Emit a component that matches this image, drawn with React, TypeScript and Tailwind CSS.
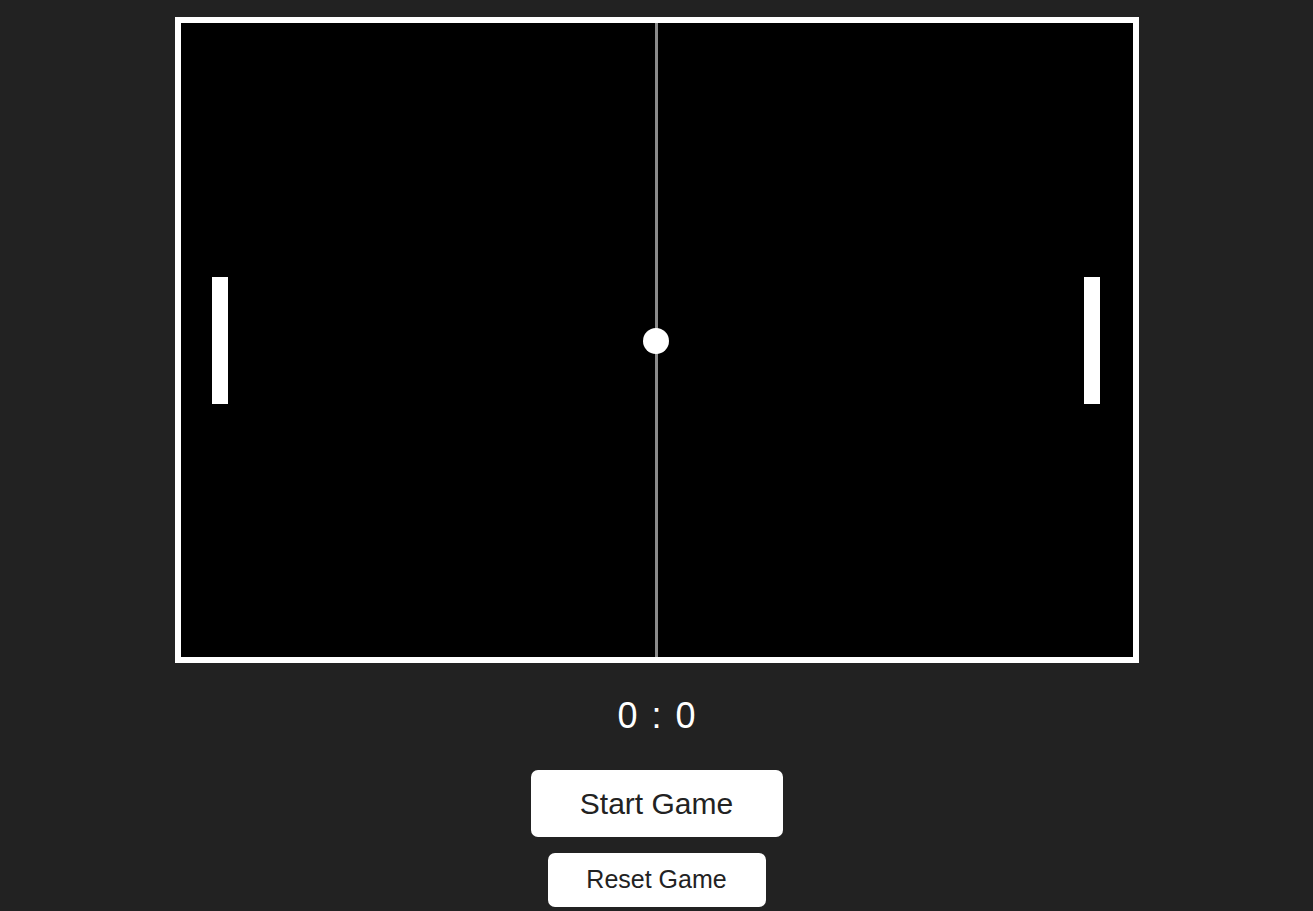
export default function App() {
    return (
        <div className="min-h-screen w-full bg-[#222222] flex flex-col items-center pt-[17px] font-['Liberation_Sans',Arial,sans-serif]">
            <div className="relative w-[964px] h-[646px] border-[6px] border-white bg-black">
                {/* center line */}
                <div className="absolute left-[474px] top-0 h-full w-[3px] bg-[#8a8a8a]" />
                {/* paddles */}
                <div className="absolute left-[31px] top-[254px] w-[16px] h-[127px] bg-white" />
                <div className="absolute left-[903px] top-[254px] w-[16px] h-[127px] bg-white" />
                {/* ball */}
                <div className="absolute left-[462px] top-[305px] w-[26px] h-[26px] rounded-full bg-white" />
            </div>

            <div className="mt-[32px] flex flex-row items-center gap-[14px] text-[36px] leading-[41px] text-white">
                <span>0</span>
                <span>:</span>
                <span>0</span>
            </div>

            <button className="mt-[34px] w-[252px] h-[67px] rounded-[7px] bg-white text-[30px] text-[#222222]">
                Start Game
            </button>
            <button className="mt-[16px] w-[218px] h-[54px] rounded-[7px] bg-white text-[25px] text-[#222222]">
                Reset Game
            </button>
        </div>
    );
}
